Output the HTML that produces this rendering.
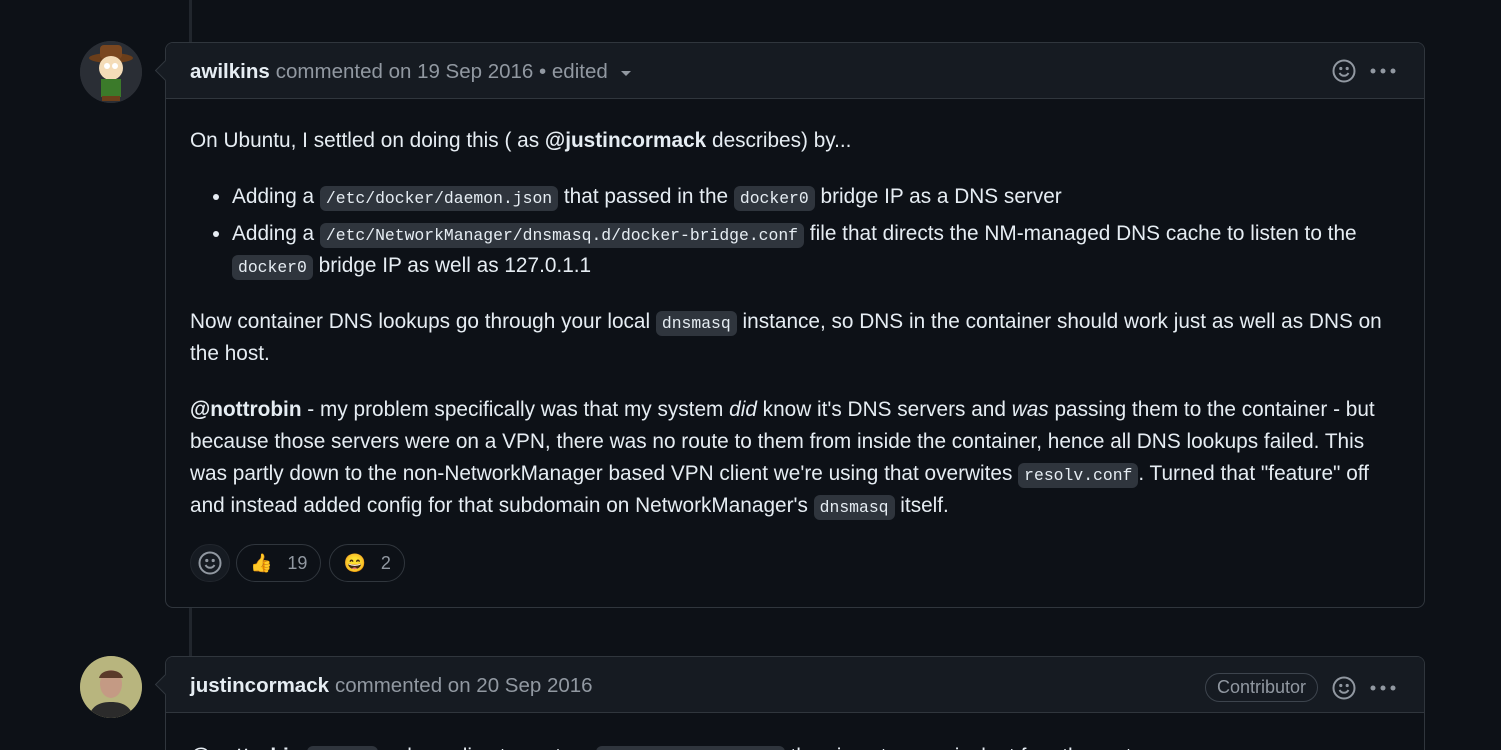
<!DOCTYPE html>
<html><head><meta charset="utf-8"><style>
html,body{margin:0;width:1501px;height:750px;overflow:hidden}
body{background:#0d1117;font-family:"Liberation Sans",sans-serif;color:#e6edf3;position:relative}
.line{position:absolute;left:189px;top:0;width:3px;height:750px;background:#21262d}
.card{position:absolute;left:165px;width:1258px;border:1px solid #30363d;border-radius:8px;background:#0d1117;overflow:hidden}
.hd{height:56px;background:#161b22;border-bottom:1px solid #30363d;display:flex;align-items:center;padding-left:24px;font-size:20.5px;color:#9198a1;position:relative;padding-top:2px;box-sizing:border-box}
.hd b{color:#e6edf3;margin-right:6px}
.arrow{position:absolute;left:158px;width:14px;height:14px;background:#161b22;border-left:1px solid #30363d;border-bottom:1px solid #30363d;transform:rotate(45deg)}
.bd{padding:26px 24px 0 24px;font-size:20.8px;line-height:32px}
.bd p{margin:0 0 24px}
.bd ul{margin:0 0 24px;padding-left:42px}
.bd li+li{margin-top:5px}
code{font-family:"Liberation Mono",monospace;font-size:16.4px;background:#2f353d;border-radius:6px;padding:3px 6px;line-height:1}
.av{position:absolute;left:80px;width:62px;height:62px;border-radius:50%;overflow:hidden}
.icons{position:absolute;right:28px;top:16px;display:flex;align-items:center;gap:14px}
.pill{display:inline-flex;align-items:center;height:36px;border:1px solid #30363d;border-radius:19px;padding:0 13px;font-size:18px;color:#9198a1;margin-right:8px;vertical-align:top}
.ctr{border:1px solid #3d444d;border-radius:16px;padding:3px 11px;font-size:18px;color:#9198a1}
</style></head><body>
<div class="line"></div>

<div class="av" style="top:41px;background:#2b2f36">
<svg width="62" height="62" viewBox="0 0 62 62"><rect x="0" y="0" width="62" height="62" fill="#2a2e35"/><ellipse cx="31" cy="17" rx="22" ry="5" fill="#6b3e1a"/><rect x="20" y="4" width="22" height="14" rx="4" fill="#7a4720"/><circle cx="31" cy="27" r="12" fill="#f4dcb8"/><circle cx="27" cy="25" r="3" fill="#fff"/><circle cx="35" cy="25" r="3" fill="#fff"/><rect x="21" y="38" width="20" height="18" fill="#3b7a2a"/><rect x="22" y="55" width="18" height="5" fill="#6b3e1a"/></svg></div>

<div class="card" style="top:42px;height:564px">
<div class="hd"><b>awilkins</b> commented on 19 Sep 2016 • edited <svg width="12" height="8" style="margin-left:12px;margin-top:4px"><path d="M1 1h10L6 6z" fill="#9198a1"/></svg>
<div class="icons"><svg width="24" height="24" viewBox="0 0 24 24" fill="none" stroke="#9198a1" stroke-width="2"><circle cx="12" cy="12" r="10.5"/><path d="M7.5 14c1.2 2 2.8 2.8 4.5 2.8s3.3-.8 4.5-2.8"/><circle cx="8.8" cy="9.5" r=".6" fill="#9198a1"/><circle cx="15.2" cy="9.5" r=".6" fill="#9198a1"/></svg><svg width="26" height="6"><circle cx="3" cy="3" r="2.5" fill="#9198a1"/><circle cx="13" cy="3" r="2.5" fill="#9198a1"/><circle cx="23" cy="3" r="2.5" fill="#9198a1"/></svg></div></div>
<div class="bd">
<p>On Ubuntu, I settled on doing this ( as <b>@justincormack</b> describes) by...</p>
<ul><li>Adding a <code>/etc/docker/daemon.json</code> that passed in the <code>docker0</code> bridge IP as a DNS server</li>
<li>Adding a <code>/etc/NetworkManager/dnsmasq.d/docker-bridge.conf</code> file that directs the NM-managed DNS cache to listen to the <code>docker0</code> bridge IP as well as 127.0.1.1</li></ul>
<p>Now container DNS lookups go through your local <code>dnsmasq</code> instance, so DNS in the container should work just as well as DNS on the host.</p>
<p><b>@nottrobin</b> - my problem specifically was that my system <i>did</i> know it's DNS servers and <i>was</i> passing them to the container - but because those servers were on a VPN, there was no route to them from inside the container, hence all DNS lookups failed. This was partly down to the non-NetworkManager based VPN client we're using that overwites <code>resolv.conf</code>. Turned that "feature" off and instead added config for that subdomain on NetworkManager's <code>dnsmasq</code> itself.</p>
<div style="margin-top:-2px"><span class="pill" style="width:38px;padding:0;justify-content:center;background:#161b22;border-color:#21262d;margin-right:6px"><svg width="24" height="24" viewBox="0 0 24 24" fill="none" stroke="#9198a1" stroke-width="2"><circle cx="12" cy="12" r="10.5"/><path d="M7.5 14c1.2 2 2.8 2.8 4.5 2.8s3.3-.8 4.5-2.8"/><circle cx="8.8" cy="9.5" r=".6" fill="#9198a1"/><circle cx="15.2" cy="9.5" r=".6" fill="#9198a1"/></svg></span><span class="pill">👍&nbsp;&nbsp;&nbsp;19</span><span class="pill">😄&nbsp;&nbsp;&nbsp;2</span></div>
</div></div>
<div class="arrow" style="top:63px"></div>

<div class="av" style="top:656px;background:#5a5a40"><svg width="62" height="62" viewBox="0 0 62 62"><rect width="62" height="62" fill="#b8b57e"/><ellipse cx="31" cy="28" rx="11" ry="14" fill="#c49a84"/><path d="M19 22c2-10 22-10 24 0" fill="#5a3a2a"/><path d="M8 62c4-14 14-16 23-16s19 2 23 16z" fill="#2b2b2b"/></svg></div>

<div class="card" style="top:656px;height:110px">
<div class="hd"><b>justincormack</b> commented on 20 Sep 2016
<div class="icons"><span class="ctr">Contributor</span><svg width="24" height="24" viewBox="0 0 24 24" fill="none" stroke="#9198a1" stroke-width="2"><circle cx="12" cy="12" r="10.5"/><path d="M7.5 14c1.2 2 2.8 2.8 4.5 2.8s3.3-.8 4.5-2.8"/><circle cx="8.8" cy="9.5" r=".6" fill="#9198a1"/><circle cx="15.2" cy="9.5" r=".6" fill="#9198a1"/></svg><svg width="26" height="6"><circle cx="3" cy="3" r="2.5" fill="#9198a1"/><circle cx="13" cy="3" r="2.5" fill="#9198a1"/><circle cx="23" cy="3" r="2.5" fill="#9198a1"/></svg></div></div>
<div class="bd" style="padding-top:28px"><p><b>@nottrobin</b> <code>docker</code> only applies to custom <code>networks.conf.json</code> then is not so equivalent for other setups</p></div>
</div>
<div class="arrow" style="top:677px"></div>
</body></html>
